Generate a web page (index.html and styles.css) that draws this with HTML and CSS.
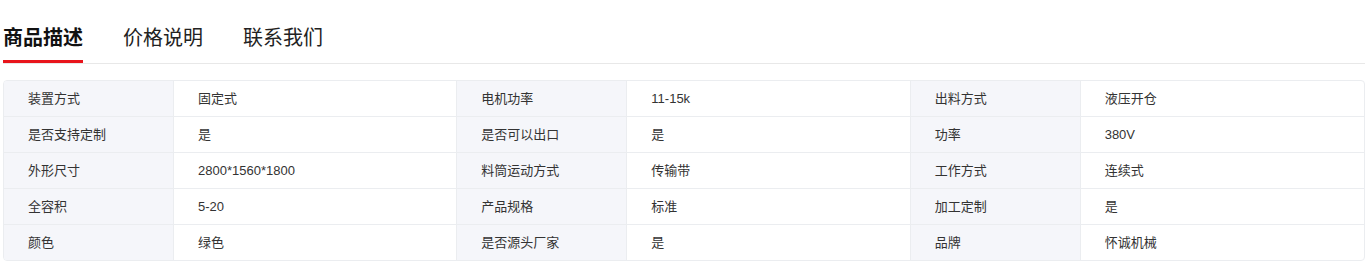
FILE: index.html
```html
<!DOCTYPE html>
<html lang="zh-CN">
<head>
<meta charset="utf-8">
<title>商品描述</title>
<link rel="stylesheet" href="styles.css">
</head>
<body>
<div class="wrap">
  <div class="tabs">
    <div class="tab active">商品描述</div>
    <div class="tab">价格说明</div>
    <div class="tab">联系我们</div>
  </div>
  <div class="spec">
    <div class="row">
      <div class="k">装置方式</div><div class="v">固定式</div>
      <div class="k">电机功率</div><div class="v">11-15k</div>
      <div class="k">出料方式</div><div class="v">液压开仓</div>
    </div>
    <div class="row">
      <div class="k">是否支持定制</div><div class="v">是</div>
      <div class="k">是否可以出口</div><div class="v">是</div>
      <div class="k">功率</div><div class="v">380V</div>
    </div>
    <div class="row">
      <div class="k">外形尺寸</div><div class="v">2800*1560*1800</div>
      <div class="k">料筒运动方式</div><div class="v">传输带</div>
      <div class="k">工作方式</div><div class="v">连续式</div>
    </div>
    <div class="row">
      <div class="k">全容积</div><div class="v">5-20</div>
      <div class="k">产品规格</div><div class="v">标准</div>
      <div class="k">加工定制</div><div class="v">是</div>
    </div>
    <div class="row">
      <div class="k">颜色</div><div class="v">绿色</div>
      <div class="k">是否源头厂家</div><div class="v">是</div>
      <div class="k">品牌</div><div class="v">怀诚机械</div>
    </div>
  </div>
</div>
</body>
</html>
```
FILE: styles.css
```css
html, body {
  margin: 0;
  padding: 0;
  background: #fff;
}
body {
  font-family: "Liberation Sans", "Noto Sans CJK SC", sans-serif;
  color: #333;
}
.wrap {
  margin-left: 3px;
  width: 1362px;
}
.tabs {
  display: flex;
  gap: 40px;
  border-bottom: 1px solid #e8e8e8;
}
.tab {
  font-family: "Noto Sans CJK SC", sans-serif;
  font-size: 20px;
  line-height: 28px;
  padding: 23px 0 9px;
  border-bottom: 3px solid transparent;
  color: #222;
  width: 80px;
}
.tab.active {
  font-weight: 700;
  color: #111;
  border-bottom-color: #e8141b;
}
.spec {
  margin-top: 16px;
  border: 1px solid #ebedf0;
  border-radius: 4px;
  overflow: hidden;
}
.row {
  display: grid;
  grid-template-columns: 3fr 5fr 3fr 5fr 3fr 5fr;
  border-bottom: 1px solid #ebedf0;
}
.row:last-child {
  border-bottom: none;
}
.k, .v {
  height: 35px;
  line-height: 35px;
  padding-left: 24px;
  font-size: 13px;
  color: #333;
  white-space: nowrap;
}
.k {
  background: #f5f6fa;
  border-right: 1px solid #ebedf0;
}
.v {
  border-right: 1px solid #ebedf0;
}
.v:last-child {
  border-right: none;
}
```
